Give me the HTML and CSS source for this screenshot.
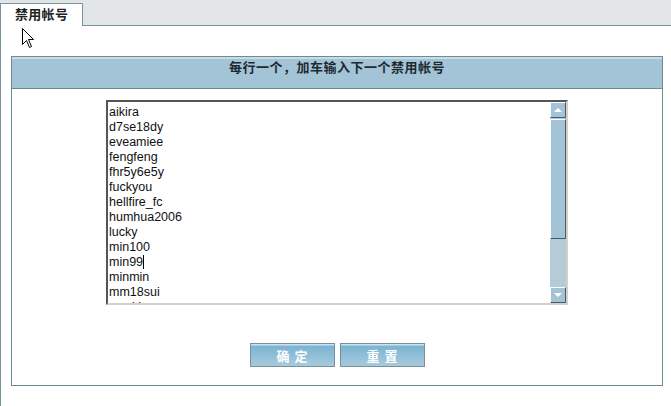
FILE: index.html
```html
<!DOCTYPE html>
<html lang="zh-CN">
<head>
<meta charset="utf-8">
<title>禁用帐号</title>
<link rel="stylesheet" href="styles.css">
</head>
<body>
<div class="tabbar">
  <div class="tab">禁用帐号</div>
</div>
<div class="page">
  <svg class="pointer" width="13" height="21" viewBox="0 0 13 21">
    <path d="M0.5 0.5 L0.5 16.5 L4.5 12.5 L7.5 19.5 L9.5 18.5 L6.5 11.5 L11.5 11.5 Z" fill="#fff" stroke="#000" stroke-width="1"/>
  </svg>
  <div class="panel">
    <div class="panel-head">每行一个，加车输入下一个禁用帐号</div>
    <div class="panel-body">
      <div class="listbox">
        <div class="lines">
          <div>aikira</div>
          <div>d7se18dy</div>
          <div>eveamiee</div>
          <div>fengfeng</div>
          <div>fhr5y6e5y</div>
          <div>fuckyou</div>
          <div>hellfire_fc</div>
          <div>humhua2006</div>
          <div>lucky</div>
          <div>min100</div>
          <div>min99<span class="caret"></span></div>
          <div>minmin</div>
          <div>mm18sui</div>
          <div>ssmking</div>
        </div>
        <div class="scroll">
          <div class="sbtn up"><span class="tri-up"></span></div>
          <div class="thumb"></div>
          <div class="track"></div>
          <div class="sbtn down"><span class="tri-down"></span></div>
        </div>
      </div>
      <div class="actions">
        <button class="btn" type="button">确 定</button>
        <button class="btn" type="button">重 置</button>
      </div>
    </div>
  </div>
</div>
</body>
</html>
```
FILE: styles.css
```css
html, body {
  margin: 0;
  padding: 0;
  background: #fff;
  font-family: "Liberation Sans", "Noto Sans CJK SC", sans-serif;
  font-size: 12px;
  color: #000;
}

/* top tab strip */
.tabbar {
  height: 25px;
  background: #e1e5e7;
  border-bottom: 1px solid #7a949c;
  display: flex;
  align-items: flex-end;
}
.tab {
  width: 83px;
  height: 23px;
  margin-bottom: -1px;
  background: #fff;
  border: 1px solid #7a949c;
  border-bottom: none;
  box-sizing: border-box;
  padding-left: 14px;
  font-family: "Noto Sans CJK SC", sans-serif;
  font-weight: bold;
  font-size: 13px;
  line-height: 20px;
  color: #222;
  letter-spacing: 0.3px;
}

.page {
  position: relative;
  border-left: 1px solid #7a949c;
  height: 380px;
  box-sizing: border-box;
  padding: 30px 8px 0 10px;
}
.pointer {
  position: absolute;
  left: 21px;
  top: 2px;
}

.panel {
  width: 652px;
  box-sizing: border-box;
  border: 1px solid #6f8a94;
}
.panel-head {
  height: 32px;
  box-sizing: border-box;
  background: #a3c4d6;
  border-top: 2px solid #c8dce6;
  border-bottom: 1px solid #6f8a94;
  text-align: center;
  font-family: "Noto Sans CJK SC", sans-serif;
  font-weight: bold;
  font-size: 13px;
  letter-spacing: 0.5px;
  line-height: 15px;
  color: #1e2a30;
}
.panel-body {
  padding: 11px 0 18px 94px;
}

/* account list box */
.listbox {
  width: 462px;
  height: 205px;
  box-sizing: border-box;
  display: flex;
  border-style: solid;
  border-width: 2px;
  border-color: #555 #d4d0c8 #d4d0c8 #555;
  background: #fff;
}
.lines {
  flex: 1;
  overflow: hidden;
  padding: 3px 0 0 1px;
  font-size: 12.5px;
  line-height: 15px;
  color: #111;
}
.caret {
  display: inline-block;
  width: 1px;
  height: 14px;
  background: #000;
  vertical-align: -3px;
}

.scroll {
  width: 16px;
  display: flex;
  flex-direction: column;
  background: #b3ccd8;
}
.sbtn, .thumb {
  box-sizing: border-box;
  background: #a3c4d6;
  border-style: solid;
  border-width: 1px;
  border-color: #fff #4a5a62 #4a5a62 #fff;
  display: flex;
  align-items: center;
  justify-content: center;
}
.sbtn {
  height: 16px;
}
.thumb {
  height: 120px;
  margin-top: 1px;
}
.track {
  flex: 1;
}
.tri-up {
  width: 0;
  height: 0;
  border-left: 4px solid transparent;
  border-right: 4px solid transparent;
  border-bottom: 4px solid #fff;
}
.tri-down {
  width: 0;
  height: 0;
  border-left: 4px solid transparent;
  border-right: 4px solid transparent;
  border-top: 4px solid #fff;
}

/* form buttons */
.actions {
  display: flex;
  gap: 5px;
  padding: 38px 0 0 144px;
}
.btn {
  width: 85px;
  height: 24px;
  box-sizing: border-box;
  border: 1px solid #7a9098;
  background: linear-gradient(#cfe2ec 0, #cfe2ec 1px, #7ab4d4 2px, #a8cadc 100%);
  color: #fff;
  font-family: "Noto Sans CJK SC", sans-serif;
  font-weight: bold;
  font-size: 13px;
  letter-spacing: 1px;
  padding: 0;
  margin: 0;
}
```
